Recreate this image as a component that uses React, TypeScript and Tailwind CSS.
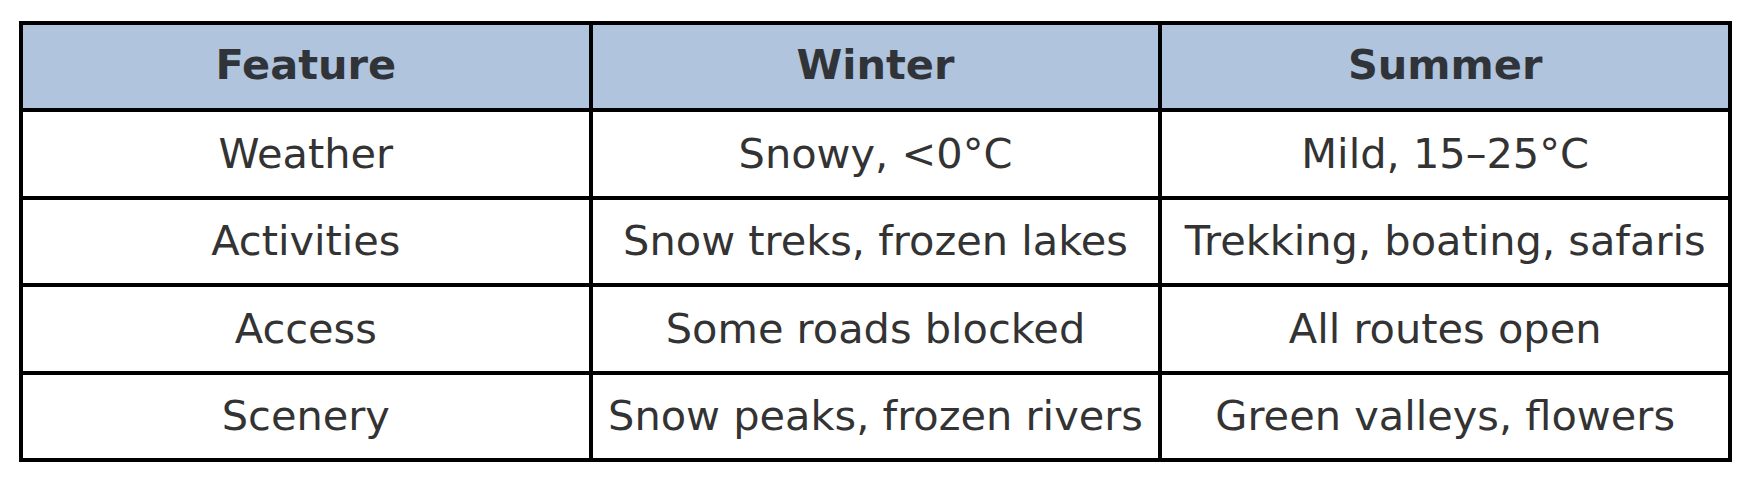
import React from "react";

const header = ["Feature", "Winter", "Summer"];
const rows = [
  ["Weather", "Snowy, <0°C", "Mild, 15–25°C"],
  ["Activities", "Snow treks, frozen lakes", "Trekking, boating, safaris"],
  ["Access", "Some roads blocked", "All routes open"],
  ["Scenery", "Snow peaks, frozen rivers", "Green valleys, flowers"],
];

export default function App() {
  return (
    <div className="w-[1752px] h-[486px] bg-white pl-[19px] pt-[21px]" style={{ fontFamily: '"DejaVu Sans", sans-serif' }}>
      <div className="w-[1713px] h-[441px] bg-black p-[4px] grid grid-cols-3 grid-rows-5 gap-[4px]">
        {header.map((h) => (
          <div key={h} className="bg-[#b0c4de] flex items-center justify-center pb-[4px] text-[41.5px] font-bold text-[#303438]">
            {h}
          </div>
        ))}
        {rows.flat().map((c, i) => (
          <div key={i} className="bg-white flex items-center justify-center text-[41.5px] text-[#333333] whitespace-nowrap">
            {c}
          </div>
        ))}
      </div>
    </div>
  );
}
